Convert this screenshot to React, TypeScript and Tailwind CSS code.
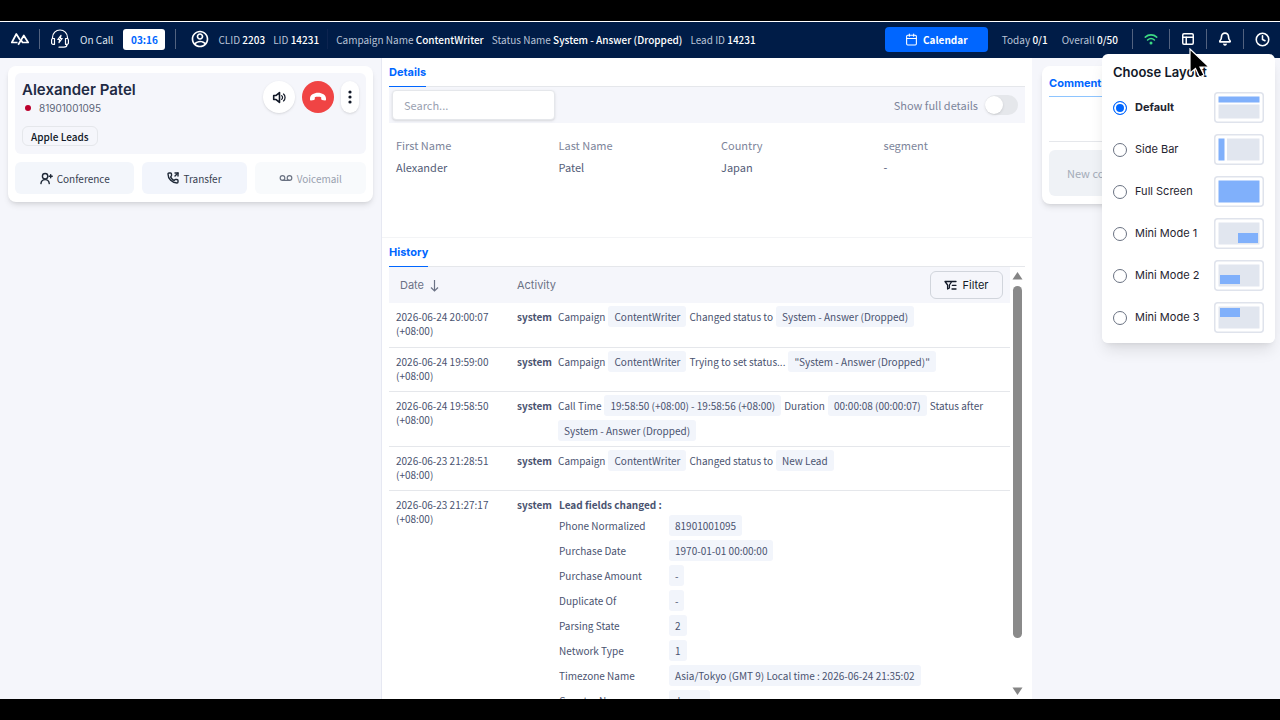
import { ReactNode, useState } from 'react';
import { Bell, Calendar, Clock, PanelsTopLeft, PhoneOutgoing, Voicemail } from 'lucide-react';
import { RiAccountCircleLine } from 'react-icons/ri';

type LayoutId = 'default' | 'sidebar' | 'full' | 'mini1' | 'mini2' | 'mini3';

const layouts: { id: LayoutId; label: string }[] = [
  { id: 'default', label: 'Default' },
  { id: 'sidebar', label: 'Side Bar' },
  { id: 'full', label: 'Full Screen' },
  { id: 'mini1', label: 'Mini Mode 1' },
  { id: 'mini2', label: 'Mini Mode 2' },
  { id: 'mini3', label: 'Mini Mode 3' },
];

const details = [
  { label: 'First Name', value: 'Alexander' },
  { label: 'Last Name', value: 'Patel' },
  { label: 'Country', value: 'Japan' },
  { label: 'segment', value: '-' },
];

// odd entries of `parts` are shown as chips
const history = [
  { date: '2026-06-24 20:00:07', parts: ['Campaign', 'ContentWriter', 'Changed status to', 'System - Answer (Dropped)'] },
  { date: '2026-06-24 19:59:00', parts: ['Campaign', 'ContentWriter', 'Trying to set status...', '"System - Answer (Dropped)"'] },
  {
    date: '2026-06-24 19:58:50',
    parts: [
      'Call Time',
      '19:58:50 (+08:00) - 19:58:56 (+08:00)',
      'Duration',
      '00:00:08 (00:00:07)',
      'Status after',
      'System - Answer (Dropped)',
    ],
  },
  { date: '2026-06-23 21:28:51', parts: ['Campaign', 'ContentWriter', 'Changed status to', 'New Lead'] },
];

const leadFields = [
  ['Phone Normalized', '81901001095'],
  ['Purchase Date', '1970-01-01 00:00:00'],
  ['Purchase Amount', '-'],
  ['Duplicate Of', '-'],
  ['Parsing State', '2'],
  ['Network Type', '1'],
  ['Timezone Name', 'Asia/Tokyo (GMT 9) Local time : 2026-06-24 21:35:02'],
  ['Country Name', 'Japan'],
];

function Logo() {
  return (
    <svg width="20" height="14" viewBox="0 0 20 14" fill="none" stroke="white" strokeWidth="1.7" strokeLinejoin="round">
      <path d="M7.500 10.500H1.800L6.300 2l3.800 6" />
      <path d="M8.200 12.800l5.600-9.300 4.400 7h-5.600l-1.500-2.300" />
    </svg>
  );
}

function HeadsetIcon() {
  return (
    <svg width="20" height="20" viewBox="0 0 20 20" fill="none" stroke="white" strokeWidth="1.2" strokeLinecap="round" strokeLinejoin="round">
      <path d="M2.500 9.500V8.500a7.500 7.500 0 0 1 15 0v1" />
      <path d="M4.500 9.500H3a1.400 1.400 0 0 0-1.400 1.400v3A1.400 1.400 0 0 0 3 15.300h1.500zM15.500 9.500H17a1.400 1.400 0 0 1 1.400 1.400v3a1.400 1.400 0 0 1-1.400 1.400h-1.500z" />
      <path d="M17 15.500c0 1.600-1.200 2.700-3 2.700H9" />
      <path d="M11 6.300l-3.200 4.200h1.900L9 13.700l3.200-4.200h-1.900z" />
    </svg>
  );
}

function VolumeIcon() {
  return (
    <svg width="15" height="15" viewBox="0 0 16 16" fill="none" stroke="#111827" strokeWidth="1.7" strokeLinejoin="round" strokeLinecap="round">
      <path d="M1.800 5.800h2.600L8 2.800v10.400L4.400 10.200H1.800z" />
      <path d="M10.300 6a2.600 2.600 0 0 1 0 4M12.300 4.300a5 5 0 0 1 0 7.400" strokeWidth="1.300" />
    </svg>
  );
}

function HangUpIcon() {
  return (
    <svg width="16" height="10" viewBox="0 0 16 10" fill="white">
      <path d="M0 6.500C0 3 4 .8 8 .8s8 2.200 8 5.700v1.200c0 .6-.4.9-1 .8l-3-.6c-.5-.1-.8-.4-.8-.9V5.200c-2-.6-4.400-.6-6.400 0V7c0 .5-.3.8-.8.9l-3 .6c-.6.1-1-.2-1-.8z" />
    </svg>
  );
}

function MoreIcon() {
  return (
    <svg width="4" height="14" viewBox="0 0 4 14" fill="#111827">
      <circle cx="2" cy="2" r="1.600" />
      <circle cx="2" cy="7" r="1.600" />
      <circle cx="2" cy="12" r="1.600" />
    </svg>
  );
}

function UserPlusIcon() {
  return (
    <svg width="13" height="13" viewBox="0 0 14 14" fill="none" stroke="#1f2937" strokeWidth="1.500" strokeLinecap="round">
      <circle cx="5.500" cy="4.500" r="2.900" />
      <path d="M1 12.500c.3-2.600 2-4.300 4.500-4.300s4.200 1.700 4.500 4.300M11.500 2.800v3.400M9.800 4.500h3.400" />
    </svg>
  );
}

function WifiIcon() {
  return (
    <svg width="14" height="12" viewBox="0 0 14 12" fill="none" stroke="#3ddc84" strokeWidth="1.600" strokeLinecap="round">
      <path d="M1.300 4.100c3.300-3 8.100-3 11.400 0M3.600 7c2-1.800 4.800-1.800 6.800 0" />
      <circle cx="7" cy="9.900" r=".7" fill="#3ddc84" />
    </svg>
  );
}

function FilterIcon() {
  return (
    <svg width="13" height="11" viewBox="0 0 13 11" fill="none" stroke="#111827" strokeWidth="1.300" strokeLinejoin="round" strokeLinecap="round">
      <path d="M7.800 1.500H1l2.600 3.500v4l1.800-1V5zM7.800 1.500H12M8.300 5.300H12M8 9h4" />
    </svg>
  );
}

function Divider({ faint }: { faint?: boolean }) {
  return <div className={faint ? 'h-5 w-px bg-[#0d2450]' : 'h-5 w-px bg-[#52627f]'} />;
}

function Pair({ label, value }: { label: string; value: string }) {
  return (
    <span className="whitespace-nowrap text-[#b9c3d6]">
      {label} <span className="font-medium text-white">{value}</span>
    </span>
  );
}

function TopBar() {
  return (
    <header className="flex h-[37px] shrink-0 items-center border-t border-white bg-[#001c47] px-[10px] pb-[2px] text-[10px]">
      <Logo />
      <div className="ml-[9px] flex items-center gap-[10px]">
        <Divider />
        <HeadsetIcon />
        <span className="whitespace-nowrap text-[#dfe5ef]">On Call</span>
        <span className="flex h-[21px] w-[42px] items-center justify-center rounded-[3px] bg-white font-bold text-[#0066ff]">
          03:16
        </span>
        <Divider />
      </div>
      <div className="ml-[14px] flex items-center gap-2">
        <RiAccountCircleLine size={20} className="text-white" />
        <Pair label="CLID" value="2203" />
        <Pair label="LID" value="14231" />
        <Divider faint />
        <Pair label="Campaign Name" value="ContentWriter" />
        <Pair label="Status Name" value="System - Answer (Dropped)" />
        <Pair label="Lead ID" value="14231" />
      </div>
      <div className="ml-auto flex items-center gap-[14px]">
        <button className="flex h-[25px] w-[103px] items-center justify-center gap-[5px] rounded-[4px] bg-[#0066ff] font-bold text-white">
          <Calendar size={13} />
          Calendar
        </button>
        <Pair label="Today" value="0/1" />
        <Pair label="Overall" value="0/50" />
        <div className="flex items-center gap-[11px]">
          <Divider />
          <WifiIcon />
          <Divider />
          <button aria-label="Layout">
            <PanelsTopLeft size={14} strokeWidth={2.500} className="text-white" />
          </button>
          <Divider />
          <button aria-label="Notifications">
            <Bell size={14} strokeWidth={2.800} className="text-white" />
          </button>
          <Divider />
          <button aria-label="Clock">
            <Clock size={15} strokeWidth={2.500} className="text-white" />
          </button>
        </div>
      </div>
    </header>
  );
}

function LeadCard() {
  return (
    <section className="rounded-lg bg-white px-[7px] pt-[7px] pb-2 shadow-md">
      <div className="flex justify-between rounded-md bg-[#f5f6fb] px-[7px] pt-2 pb-2">
        <div>
          <h1 className="font-['Inter',sans-serif] text-[15px] leading-[18px] font-semibold text-[#1f2a44]">Alexander Patel</h1>
          <div className="flex h-[18px] items-center gap-2 pl-[3px] font-['Inter',sans-serif] text-[10px] text-[#5b6478]">
            <span className="size-[6px] rounded-full bg-[#bc002d]" />
            81901001095
          </div>
          <span className="mt-[9px] flex h-5 w-fit items-center rounded-md border border-gray-200 px-2 text-[10px] font-medium text-[#111827]">
            Apple Leads
          </span>
        </div>
        <div className="flex h-8 gap-[7px]">
          <button aria-label="Volume" className="flex size-8 items-center justify-center rounded-full bg-white shadow-sm">
            <VolumeIcon />
          </button>
          <button aria-label="Hang up" className="flex size-8 items-center justify-center rounded-full bg-[#f04444]">
            <HangUpIcon />
          </button>
          <button aria-label="More" className="flex h-8 w-[18px] items-center justify-center rounded-full bg-white shadow-sm">
            <MoreIcon />
          </button>
        </div>
      </div>
      <div className="mt-2 flex gap-2 text-[10px] text-[#374151]">
        <button className="flex h-8 flex-[119] items-center justify-center gap-1 rounded-md bg-[#f3f6fb]">
          <UserPlusIcon />
          Conference
        </button>
        <button className="flex h-8 flex-[104] items-center justify-center gap-1 rounded-md bg-[#f2f5fc]">
          <PhoneOutgoing size={12} strokeWidth={2.800} className="text-[#1f2937]" />
          Transfer
        </button>
        <button disabled className="flex h-8 flex-[111] items-center justify-center gap-1 rounded-md bg-[#f8fafc] text-gray-400">
          <Voicemail size={14} className="text-gray-500" />
          Voicemail
        </button>
      </div>
    </section>
  );
}

function SectionTitle({ children }: { children: ReactNode }) {
  return (
    <div className="flex h-[29px] border-b border-gray-200">
      <h2 className="-mb-px flex items-center border-b border-[#0066ff] font-['Inter',sans-serif] text-[11px] font-bold text-[#0066ff]">
        {children}
      </h2>
    </div>
  );
}

function Details() {
  return (
    <section className="h-[180px] shrink-0 border-b border-gray-100 px-[7px]">
      <SectionTitle>Details</SectionTitle>
      <div className="flex h-9 items-center justify-between bg-[#f5f6fb] pr-[7px] pl-[3px]">
        <input
          type="text"
          aria-label="Search"
          placeholder="Search..."
          className="h-[30px] w-[163px] rounded border border-gray-200 bg-white px-[11px] text-[11px] shadow-sm placeholder:text-[#9aa1b1]"
        />
        <label className="flex items-center gap-[7px] text-[11px] text-[#7c849a]">
          Show full details
          <input type="checkbox" className="peer sr-only" />
          <span className="flex h-5 w-[33px] items-center rounded-full bg-gray-200 peer-checked:justify-end peer-checked:bg-blue-500">
            <span className="size-[18px] rounded-full bg-white shadow" />
          </span>
        </label>
      </div>
      <dl className="grid grid-cols-4 gap-x-[21px] pt-[11px] pl-[7px] text-[11px] leading-[22px]">
        {details.map((field) => (
          <div key={field.label}>
            <dt className="text-[#7c849a]">{field.label}</dt>
            <dd className="text-[#545d78]">{field.value}</dd>
          </div>
        ))}
      </dl>
    </section>
  );
}

function Chip({ children }: { children: ReactNode }) {
  return <span className="flex h-[21px] items-center rounded-[3px] bg-[#f2f5fb] px-[6px] whitespace-nowrap">{children}</span>;
}

function DateCell({ date }: { date: string }) {
  return (
    <td className="px-[7px] pt-[7px] align-top leading-[14px]">
      {date}
      <br />
      (+08:00)
    </td>
  );
}

function History() {
  return (
    <section className="flex min-h-0 flex-1 flex-col px-[7px]">
      <SectionTitle>History</SectionTitle>
      <div className="flex min-h-0 flex-1">
        <div className="min-w-0 flex-1 overflow-hidden">
          <table className="w-full table-fixed border-collapse text-left text-[10px] text-[#4a5370]">
            <thead>
              <tr className="h-9 bg-[#f5f6fb] font-['Inter',sans-serif] text-[11px] text-[#6b7285]">
                <th className="w-[121px] px-[11px] font-normal">
                  <button className="flex items-center gap-[6px]">
                    Date
                    <svg width="9" height="13" viewBox="0 0 9 13" fill="none" stroke="currentColor" strokeWidth="1.200">
                      <path d="M4.500 1v11M1 8.500l3.500 3.500L8 8.500" />
                    </svg>
                  </button>
                </th>
                <th className="px-[7px] font-normal">
                  <div className="flex items-center justify-between">
                    Activity
                    <button className="flex h-7 w-[73px] items-center justify-center gap-[5px] rounded-md border border-gray-300 text-[#111827]">
                      <FilterIcon />
                      Filter
                    </button>
                  </div>
                </th>
              </tr>
            </thead>
            <tbody>
              {history.map((entry) => (
                <tr key={entry.date} className="h-11 border-b border-gray-200">
                  <DateCell date={entry.date} />
                  <td className="pt-[3px] pb-[5px] pl-[7px] align-top">
                    <div className="flex">
                      <span className="w-[41px] shrink-0 leading-[21px] font-bold">system</span>
                      <div className="flex flex-wrap gap-x-[3px] gap-y-1">
                        {entry.parts.map((part, i) =>
                          i % 2 ? (
                            <Chip key={i}>{part}</Chip>
                          ) : (
                            <span key={i} className="leading-[21px]">
                              {part}
                            </span>
                          )
                        )}
                      </div>
                    </div>
                  </td>
                </tr>
              ))}
              <tr>
                <DateCell date="2026-06-23 21:27:17" />
                <td className="pt-[3px] pl-[7px] align-top">
                  <div className="flex">
                    <span className="w-[42px] shrink-0 leading-[21px] font-bold">system</span>
                    <div>
                      <div className="leading-[21px] font-bold">Lead fields changed :</div>
                      <dl className="flex flex-col gap-1">
                        {leadFields.map(([label, value]) => (
                          <div key={label} className="flex">
                            <dt className="w-[110px] leading-[21px]">{label}</dt>
                            <dd>
                              <Chip>{value}</Chip>
                            </dd>
                          </div>
                        ))}
                      </dl>
                    </div>
                  </div>
                </td>
              </tr>
            </tbody>
          </table>
        </div>
        <div className="flex w-[15px] flex-col items-center pt-[5px] pb-1">
          <svg width="11" height="8" viewBox="0 0 11 8" fill="#858585">
            <path d="M5.500 0L10.500 7.500H.5z" />
          </svg>
          <div className="mt-[6px] h-[352px] w-[9px] rounded-full bg-[#8a8a8a]" />
          <svg width="11" height="8" viewBox="0 0 11 8" fill="#858585" className="mt-auto">
            <path d="M5.500 8L10.500 .5H.5z" />
          </svg>
        </div>
      </div>
    </section>
  );
}

function Comments() {
  return (
    <section className="rounded-lg bg-white p-[7px] pb-2 shadow-md">
      <div className="flex h-6 border-b border-blue-300">
        <h2 className="pt-[3px] font-['Inter',sans-serif] text-[11px] leading-[14px] font-bold text-[#0066ff]">Comments</h2>
      </div>
      <div className="h-[45px] border-b border-gray-200" />
      <textarea
        aria-label="New comment"
        placeholder="New comment"
        className="mt-2 block h-[46px] w-full resize-none rounded-md bg-[#eff2f6] px-[18px] pt-[14px] text-[11px] leading-[18px] placeholder:text-[#a3abb8]"
      />
    </section>
  );
}

function LayoutPreview({ id }: { id: LayoutId }) {
  return (
    <svg width="50" height="31" viewBox="0 0 50 31" className="shrink-0">
      <rect x=".75" y=".75" width="48.500" height="29.500" rx="3" fill="white" stroke="#dfe3ec" strokeWidth="1.500" />
      {id === 'default' && (
        <>
          <rect x="4.500" y="4.500" width="41" height="6" fill="#80b0fb" />
          <rect x="4.500" y="12.500" width="41" height="14" fill="#e1e6ef" />
        </>
      )}
      {id === 'sidebar' && (
        <>
          <rect x="4.500" y="4.500" width="6" height="22" fill="#80b0fb" />
          <rect x="13" y="4.500" width="32.500" height="22" fill="#e1e6ef" />
        </>
      )}
      {id === 'full' && <rect x="4.500" y="4.500" width="41" height="22" fill="#80b0fb" />}
      {id.startsWith('mini') && <rect x="4.500" y="4.500" width="41" height="22" fill="#e1e6ef" />}
      {id === 'mini1' && <rect x="24" y="15" width="20" height="10" fill="#80b0fb" />}
      {id === 'mini2' && <rect x="6" y="15" width="20" height="9" fill="#80b0fb" />}
      {id === 'mini3' && <rect x="6" y="6" width="20" height="9" fill="#80b0fb" />}
    </svg>
  );
}

function LayoutMenu() {
  const [selected, setSelected] = useState<LayoutId>('default');

  return (
    <fieldset className="absolute top-[54px] right-[5px] w-[173px] rounded-md bg-white px-[11px] pt-[9px] pb-[10px] font-['Inter',sans-serif] text-[11px] text-[#1f2430] shadow-lg">
      <legend className="float-left mb-[11px] w-full text-[13px] leading-[18px] font-semibold text-[#111827]">Choose Layout</legend>
      <div className="clear-both flex flex-col gap-[11px]">
        {layouts.map((layout) => (
          <label key={layout.id} className="flex items-center">
            <input
              type="radio"
              name="layout"
              checked={selected === layout.id}
              onChange={() => setSelected(layout.id)}
              className="size-[14px] appearance-none rounded-full border border-gray-500 bg-white checked:border-[#0066ff] checked:bg-[#0066ff] checked:inset-ring-2 checked:inset-ring-white"
            />
            <span className={selected === layout.id ? 'mr-auto ml-2 font-bold' : 'mr-auto ml-2'}>{layout.label}</span>
            <LayoutPreview id={layout.id} />
          </label>
        ))}
      </div>
    </fieldset>
  );
}

function Pointer() {
  return (
    <svg width="22" height="32" viewBox="0 0 22 32" className="pointer-events-none absolute top-[48px] right-[69px]">
      <path d="M1 1v24l5.500-4.500 4 8.500 4.500-2-4-8h9z" fill="black" stroke="white" strokeWidth="1.200" />
    </svg>
  );
}

export default function App() {
  return (
    <div className="h-screen overflow-hidden bg-black py-[21px] font-['Noto_Sans_CJK_SC',sans-serif]">
      <div className="flex h-full flex-col overflow-hidden">
        <TopBar />
        <main className="flex min-h-0 flex-1 bg-[#f5f6fb]">
          <aside className="w-[382px] shrink-0 border-r border-[#e6e8f2] px-2 pt-2">
            <LeadCard />
          </aside>
          <div className="flex min-w-0 flex-1 flex-col bg-white">
            <Details />
            <History />
          </div>
          <aside className="w-[248px] shrink-0 px-[10px] pt-2">
            <Comments />
          </aside>
        </main>
      </div>
      <LayoutMenu />
      <Pointer />
    </div>
  );
}
